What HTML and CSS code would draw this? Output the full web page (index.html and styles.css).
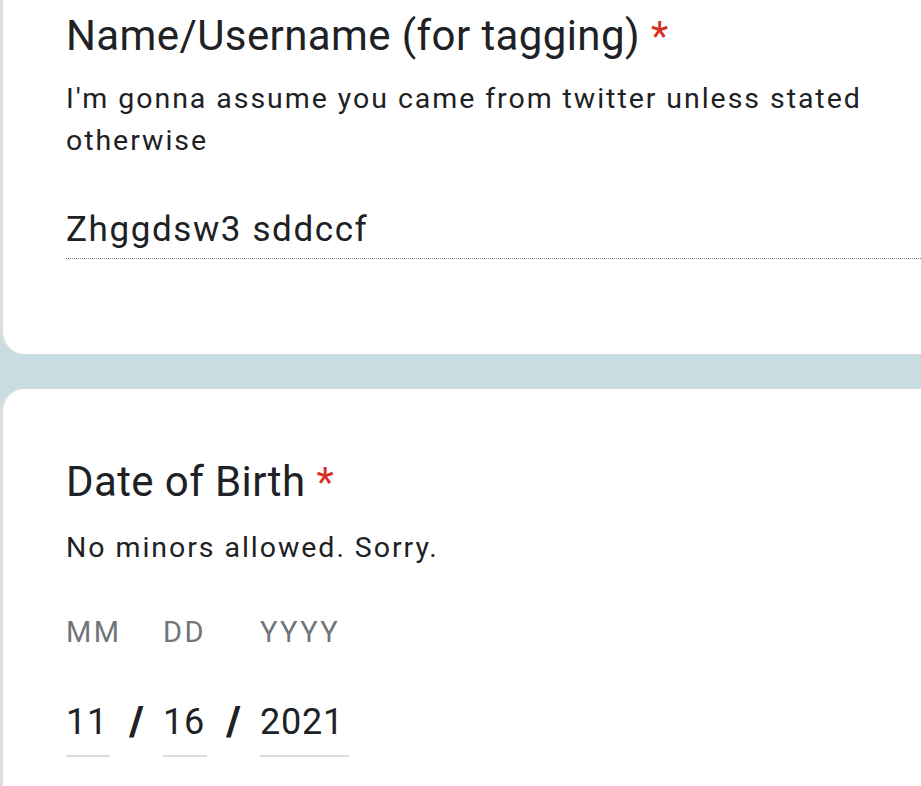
FILE: index.html
```html
<!DOCTYPE html>
<html>
<head>
<meta charset="utf-8">
<link rel="stylesheet" href="styles.css">
</head>
<body>
<div class="page">
  <section class="card card-first">
    <h2 class="q-title">Name/Username (for tagging)<span class="req">*</span></h2>
    <p class="q-desc">I'm gonna assume you came from twitter unless stated otherwise</p>
    <div class="answer">Zhggdsw3 sddccf</div>
  </section>
  <section class="card card-second">
    <h2 class="q-title">Date of Birth<span class="req">*</span></h2>
    <p class="q-desc">No minors allowed. Sorry.</p>
    <div class="date">
      <div class="date-part mm">
        <span class="date-label">MM</span>
        <span class="date-value">11</span>
      </div>
      <span class="date-sep">/</span>
      <div class="date-part dd">
        <span class="date-label">DD</span>
        <span class="date-value">16</span>
      </div>
      <span class="date-sep">/</span>
      <div class="date-part yy">
        <span class="date-label">YYYY</span>
        <span class="date-value">2021</span>
      </div>
    </div>
  </section>
</div>
</body>
</html>
```
FILE: styles.css
```css
html, body {
  margin: 0;
  padding: 0;
  background: #c8dde1;
}
.page {
  width: 921px;
  height: 786px;
  overflow: hidden;
  font-family: Roboto, "Liberation Sans", sans-serif;
  color: #202124;
}
.card {
  background: #fff;
  border-left: 3px solid #dcdddf;
  margin-right: -40px;
  padding-left: 63px;
  box-sizing: border-box;
}
.card-first {
  height: 355px;
  border-bottom: 1px solid #d6d9db;
  border-bottom-left-radius: 24px;
  padding-top: 10px;
}
.card-second {
  margin-top: 33px;
  height: 420px;
  border-top: 1px solid #d6d9db;
  border-top-left-radius: 24px;
  padding-top: 67px;
}
.q-title {
  margin: 0;
  font-weight: 400;
  font-size: 42px;
  line-height: 52px;
  letter-spacing: 0.4px;
}
.req {
  color: #d93025;
  margin-left: 11px;
  font-size: 40px;
}
.q-desc {
  margin: 15px 0 0;
  font-size: 28.5px;
  line-height: 42px;
  letter-spacing: 1.95px;
  padding-right: 20px;
}
.answer {
  margin-top: 46px;
  font-size: 35px;
  line-height: 44px;
  letter-spacing: 1.6px;
  padding-bottom: 6px;
  border-bottom: 1px dotted #7a7a7a;
}
.card-second .q-desc {
  margin-top: 18px;
}
.date {
  display: flex;
  align-items: flex-end;
  margin-top: 45px;
}
.date-part {
  display: flex;
  flex-direction: column;
}
.date-label {
  font-size: 29px;
  line-height: 36px;
  color: #70757a;
  letter-spacing: 2.4px;
}
.date-value {
  margin-top: 50px;
  font-size: 36px;
  line-height: 44px;
  letter-spacing: 0.8px;
  padding-bottom: 11px;
  border-bottom: 2px solid #dadce0;
}
.mm { width: 44px; }
.dd { width: 44px; }
.yy { width: 89px; }
.date-sep {
  font-size: 40px;
  font-weight: 900;
  line-height: 44px;
  width: 53px;
  text-align: center;
  margin-bottom: 13px;
}
```
